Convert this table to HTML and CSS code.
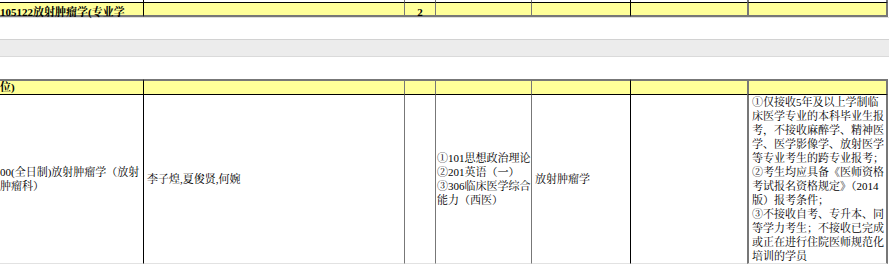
FILE: index.html
```html
<!DOCTYPE html>
<html lang="zh-CN">
<head>
<meta charset="utf-8">
<title>放射肿瘤学</title>
<link rel="stylesheet" href="styles.css">
</head>
<body>
<div class="sheet">
  <div class="grid top">
    <div class="c c1 stub"></div><div class="c c2 stub"></div><div class="c c3 stub"></div><div class="c c4 stub"></div><div class="c c5 stub"></div><div class="c c6 stub"></div><div class="c c7 stub"></div>
    <div class="c c1 ytop b">105122放射肿瘤学(专业学</div>
    <div class="c c2 ytop"></div>
    <div class="c c3 ytop b ctr">2</div>
    <div class="c c4 ytop"></div>
    <div class="c c5 ytop"></div>
    <div class="c c6 ytop"></div>
    <div class="c c7 ytop"></div>
  </div>
  <div class="shadow"></div>
  <div class="gap"></div>
  <div class="band"></div>
  <div class="gap2"></div>
  <div class="grid bottom">
    <div class="c c1 yhead b">位)</div>
    <div class="c c2 yhead"></div>
    <div class="c c3 yhead"></div>
    <div class="c c4 yhead"></div>
    <div class="c c5 yhead"></div>
    <div class="c c6 yhead"></div>
    <div class="c c7 yhead"></div>

    <div class="c c1 data"><div class="txt">00(全日制)放射肿瘤学（放射<br>肿瘤科）</div></div>
    <div class="c c2 data pad"><div class="txt">李子煌,夏俊贤,何婉</div></div>
    <div class="c c3 data"></div>
    <div class="c c4 data pad1"><div class="txt">①101思想政治理论<br>②201英语（一）<br>③306临床医学综合<br>能力（西医）</div></div>
    <div class="c c5 data pad"><div class="txt">放射肿瘤学</div></div>
    <div class="c c6 data"></div>
    <div class="c c7 data pad"><div class="txt">①仅接收5年及以上学制临<br>床医学专业的本科毕业生报<br>考，不接收麻醉学、精神医<br>学、医学影像学、放射医学<br>等专业考生的跨专业报考；<br>②考生均应具备《医师资格<br>考试报名资格规定》（2014<br>版）报考条件；<br>③不接收自考、专升本、同<br>等学力考生；不接收已完成<br>或正在进行住院医师规范化<br>培训的学员</div></div>
  </div>
</div>
</body>
</html>
```

FILE: styles.css
```css
html, body {
  margin: 0;
  padding: 0;
  background: #fff;
}
body {
  font-family: "Liberation Serif", "Noto Serif CJK SC", "Noto Sans CJK SC", serif;
  font-size: 11px;
  color: #000;
  overflow: hidden;
}
.sheet {
  width: 889px;
}
.grid {
  display: grid;
  grid-template-columns: 143px 261px 31px 96px 99px 117px 141px;
}
.top {
  grid-template-rows: 2px 15px;
}
.bottom {
  grid-template-rows: 16px 169px;
}
.c {
  box-sizing: border-box;
  border-left: 1px solid #777;
  overflow: hidden;
  white-space: nowrap;
}
.c1 { border-left: none; }
.c2, .c6 { border-left-color: #000; }
.c7 {
  border-left-width: 2px;
  border-right: 2px solid #777;
}
.b { font-weight: bold; }
.ctr { text-align: center; }

.stub { background: #fff; }

.ytop {
  background: #ffff99;
  border-top: 1px solid #000;
  border-bottom: 2px solid #777;
  line-height: 12px;
  padding-top: 3px;
  overflow: visible;
}

.shadow {
  height: 1px;
  background: #dedede;
}
.gap {
  height: 21px;
}
.band {
  box-sizing: border-box;
  height: 18px;
  background: #ececec;
  border-top: 1px solid #d2d2d2;
  border-bottom: 1px solid #dadada;
}
.gap2 {
  height: 22px;
}

.yhead {
  background: #ffff99;
  border-top: 2px solid #777;
  border-bottom: 1px solid #000;
  line-height: 13px;
}

.data {
  display: flex;
  align-items: center;
  line-height: 14px;
  border-bottom: 1px solid #e2e2e2;
}
.pad { padding-left: 3px; }
.pad1 { padding-left: 1px; }
.txt {
  white-space: nowrap;
}
```
